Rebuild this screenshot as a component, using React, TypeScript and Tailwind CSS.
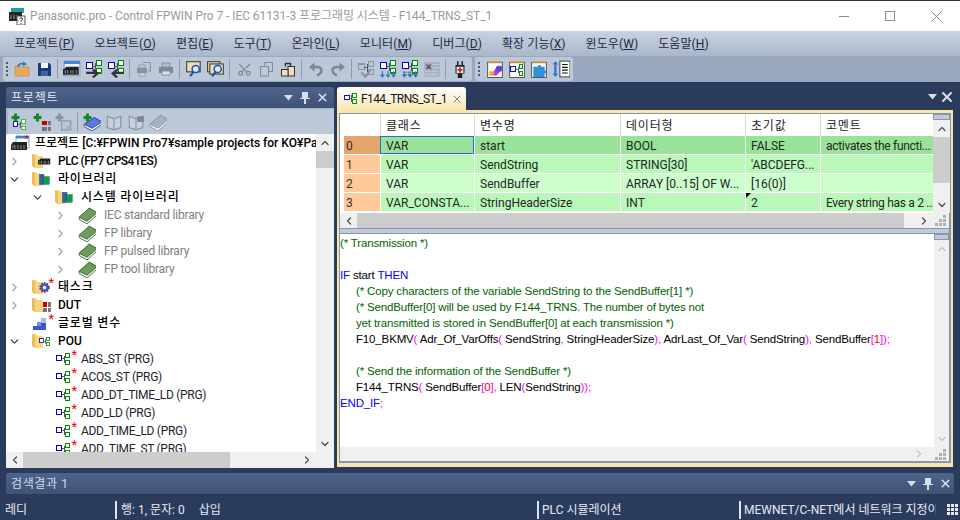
import type { ReactNode } from 'react';
import { ChevronDown, ChevronLeft, ChevronRight, ChevronUp, Scissors, X } from 'lucide-react';

const FONT = 'font-["Roboto","Noto_Sans_CJK_KR",sans-serif]';

function Ico({ children, size = 16 }: { children: ReactNode; size?: number }) {
    return (
        <svg width={size} height={size} viewBox="0 0 16 16" className="shrink-0">
            {children}
        </svg>
    );
}

function PouShape({ a = '#0000c8', b = '#008c00', fill = 'white' }: { a?: string; b?: string; fill?: string }) {
    return (
        <g fill={fill} strokeWidth="1" shapeRendering="crispEdges">
            <rect x="1.5" y="4.5" width="5" height="5" stroke={a} />
            <path d="M6.5 7.5H9.5M9.5 4.5V11.5" stroke="#555" fill="none" />
            <rect x="10.5" y="2.5" width="4" height="4" stroke={b} />
            <rect x="10.5" y="9.5" width="4" height="4" stroke={b} />
        </g>
    );
}

const Pou = () => <Ico><PouShape /></Ico>;

function Rack({ x = 1, y = 6 }: { x?: number; y?: number }) {
    return (
        <g transform={`translate(${x} ${y})`}>
            <path d="M1 2L3 0H14V7H0V2Z" fill="#222" />
            <path d="M2 3V6M4 3V6M7 3V6M9 3V6M12 3V6" stroke="#888" strokeWidth="1" />
        </g>
    );
}

const OpenIcon = () => (
    <Ico>
        <path d="M1 5H6L7 6H15V15H1Z" fill="#e9a95c" stroke="#b98543" strokeWidth="0.6" />
        <path d="M4 6C4 3 7 2 10 3" fill="none" stroke="#2478c8" strokeWidth="1.6" />
        <path d="M9 0.5L13 3L9 5.5Z" fill="#2478c8" />
    </Ico>
);

const SaveIcon = () => (
    <Ico>
        <path d="M2 2H13L15 4V15H2Z" fill="#1b3b78" />
        <rect x="5" y="2" width="7" height="5" fill="#f2f5fa" />
        <rect x="5" y="10" width="7" height="5" fill="#3e63a8" />
    </Ico>
);

const PlcIcon = () => (
    <Ico size={18}>
        <rect x="1" y="1" width="14" height="13" fill="#f2f6fc" stroke="#6d93cf" strokeWidth="0.8" />
        <rect x="1" y="1" width="14" height="2.5" fill="#3f7fd8" />
        <Rack x={0} y={6} />
    </Ico>
);

function TransferIcon({ left }: { left?: boolean }) {
    return (
        <Ico size={18}>
            <g transform="translate(0 -2)"><PouShape /></g>
            <path d={left ? 'M15 12H6M9 9L5 12.5L9 16' : 'M1 12H10M7 9L11 12.5L7 16'} transform="translate(0 -0.5)" fill="none" stroke="#333" strokeWidth="2" />
        </Ico>
    );
}

const PrintDocIcon = () => (
    <Ico>
        <path d="M7 1.5H14.5V10H12" fill="none" stroke="#8a93a3" strokeWidth="1" />
        <rect x="1" y="7" width="10" height="5" fill="#8a93a3" />
        <rect x="3" y="4" width="6" height="3" fill="#c5ccd8" stroke="#8a93a3" strokeWidth="0.8" />
        <rect x="3" y="12" width="6" height="3" fill="#d3d9e3" stroke="#8a93a3" strokeWidth="0.8" />
    </Ico>
);

const PrintIcon = () => (
    <Ico>
        <rect x="1" y="6" width="14" height="6" fill="#7f8898" />
        <rect x="4" y="2" width="8" height="4" fill="#b5bdca" stroke="#7f8898" strokeWidth="0.8" />
        <rect x="4" y="10" width="8" height="4" fill="#d8dde6" stroke="#7f8898" strokeWidth="0.8" />
    </Ico>
);

function SearchIcon({ many }: { many?: boolean }) {
    return (
        <Ico size={18}>
            {many && <rect x="0.5" y="1.5" width="11" height="9" fill="#ead9c0" stroke="#3c4a2a" />}
            <rect x={many ? 2.5 : 1.5} y={many ? 3.5 : 1.5} width="12" height="9" fill="#f2dcc0" stroke="#3c4a2a" />
            <circle cx="9.5" cy="8" r="3.2" fill="#dfe9f8" stroke="#1e50b4" strokeWidth="1.3" />
            <path d="M7.5 10.5L4.5 14.5" stroke="#1e50b4" strokeWidth="1.8" />
        </Ico>
    );
}

const CopyIcon = () => (
    <Ico>
        <path d="M6.5 4.5V1.5H14.5V10.5H11" fill="none" stroke="#808998" />
        <rect x="2.5" y="5.5" width="8" height="9.5" fill="none" stroke="#808998" />
    </Ico>
);

const PasteIcon = () => (
    <Ico>
        <rect x="8" y="5.5" width="6.5" height="9.5" fill="#f2dcc0" stroke="#333" />
        <rect x="1.5" y="8.5" width="6.5" height="6.5" fill="#f2dcc0" stroke="#333" />
        <path d="M5.5 5.5V2.5H10.5V5.5" fill="none" stroke="#333" strokeWidth="1.4" />
    </Ico>
);

const UndoIcon = ({ flip }: { flip?: boolean }) => (
    <Ico>
        <g transform={flip ? 'translate(16 0) scale(-1 1)' : undefined}>
            <path d="M4 6H9.5C12 6 13.5 7.5 13.5 9.5C13.5 11.5 12 13 9 14.5" fill="none" stroke="#7b8494" strokeWidth="2.4" />
            <path d="M1 6L6.5 1.5V10.5Z" fill="#7b8494" />
        </g>
    </Ico>
);

const CheckPouIcon = () => (
    <Ico size={18}>
        <g transform="translate(0 -1)"><PouShape a="#8a93a3" b="#8a93a3" fill="none" /></g>
        <path d="M4 11L7.5 15L12 9" fill="none" stroke="#8a93a3" strokeWidth="2" />
    </Ico>
);

function ArrowsPouIcon({ dotted }: { dotted?: boolean }) {
    return (
        <Ico size={18}>
            <g transform="translate(0 -2)"><PouShape /></g>
            {dotted && <path d="M2 11H14M2 13H14" stroke="#666" strokeWidth="1" strokeDasharray="1 1" />}
            <path d="M3 10V14M1.5 13L3 15L4.5 13M8 10V14M6.5 13L8 15L9.5 13M13 10V14M11.5 13L13 15L14.5 13" fill="none" stroke="#2a6fd8" strokeWidth="1" />
        </Ico>
    );
}

const DotsIcon = () => (
    <Ico size={18}>
        <rect x="1" y="2" width="14" height="13" fill="#a8b1c0" />
        <path d="M3 4L7 8M7 4L3 8" stroke="#555" strokeWidth="1.4" />
        <path d="M9 4H14M9 7H14M2 10H14M2 12.5H14" stroke="#d8dde6" strokeWidth="1" strokeDasharray="1 1" />
    </Ico>
);

const PlugIcon = () => (
    <Ico size={18}>
        <path d="M6 1V5M10 1V5" stroke="#222" strokeWidth="1.4" />
        <path d="M4 4.5H12V12H10V16H6V12H4Z" fill="#222" />
        <rect x="5" y="6" width="6" height="5.5" fill="#f1f1f1" />
        <path d="M8 6.5V11M5.8 8.7H10.2" stroke="#d81e2c" strokeWidth="1.5" />
    </Ico>
);

function Note({ children }: { children?: ReactNode }) {
    return (
        <Ico size={18}>
            <rect x="1.5" y="2" width="13" height="13.5" fill="white" stroke="#444" strokeWidth="0.8" />
            <path d="M2 2H14" stroke="#e3a02a" strokeWidth="2" strokeDasharray="1.5 1" />
            {children}
        </Ico>
    );
}

const Grip = () => (
    <div className="flex h-[20px] w-[8px] shrink-0 flex-col items-center justify-center gap-[2px]">
        <span className="h-[2px] w-[2px] bg-[#4b5a72]" />
        <span className="h-[2px] w-[2px] bg-[#4b5a72]" />
        <span className="h-[2px] w-[2px] bg-[#4b5a72]" />
        <span className="h-[2px] w-[2px] bg-[#4b5a72]" />
    </div>
);

const Sep = () => <span className="ml-[2px] mr-[3px] h-[20px] w-px shrink-0 bg-[#8d9ab0]" />;

const Tb = ({ children }: { children: ReactNode }) => (
    <div className="flex h-[22px] w-[22px] shrink-0 items-center justify-center">{children}</div>
);

const Plus = () => <path d="M4 0.5V7.5M0.5 4H7.5" stroke="#0f8a1e" strokeWidth="2.6" />;

const GridIcon = () => (
    <g shapeRendering="crispEdges">
        <rect x="8" y="7" width="4" height="4" fill="#c80000" />
        <rect x="13" y="7" width="3" height="4" fill="#777" />
        <rect x="8" y="12" width="4" height="4" fill="#777" />
        <rect x="13" y="12" width="3" height="4" fill="#777" />
    </g>
);

const GrayBook = ({ lock }: { lock?: boolean }) => (
    <Ico size={18}>
        <path d="M2 3L8 5V15L2 13ZM14 3L8 5V15L14 13Z" fill="#c9d0db" stroke="#8a93a3" strokeWidth="1" />
        {lock && <rect x="9" y="3" width="6" height="5" fill="#7f8898" />}
    </Ico>
);

const ClosedBook = ({ color = '#6f9c5a', edge = '#3c6a36' }: { color?: string; edge?: string }) => (
    <Ico size={18}>
        <path d="M1 10L10 2L17 6V8L8 16L1 12Z" fill="#f4f4f4" stroke={edge} strokeWidth="0.8" />
        <path d="M1 10L10 2L17 6L8 13.5Z" fill={color} stroke={edge} strokeWidth="0.8" />
    </Ico>
);

const Star = () => <span className="absolute -top-[2px] right-[4px] text-[13px] leading-[13px] text-[#f00000]">*</span>;

const Folder = () => (
    <svg width="12" height="16" viewBox="0 0 12 16" className="absolute left-0 top-[1px]">
        <path d="M0 1H4L6 3H11V15H3L0 13Z" fill="#f6d57f" />
        <path d="M0 1V13L3 15V3Z" fill="#e8bf60" />
    </svg>
);

const LibIcon = () => (
    <Ico size={12}>
        <rect x="2" y="2" width="6" height="13" fill="#2b5fb0" stroke="#1c3c70" strokeWidth="0.6" />
        <rect x="7" y="5" width="8" height="10" fill="#0e9c48" stroke="#0d5f30" strokeWidth="0.6" />
    </Ico>
);

const GearIcon = () => (
    <Ico size={13}>
        <circle cx="8" cy="8" r="5.2" fill="#5a60b8" stroke="#3a3f8f" strokeWidth="2.6" strokeDasharray="2 1.3" />
        <circle cx="8" cy="8" r="2" fill="white" />
    </Ico>
);

const VarIcon = () => (
    <Ico>
        <path d="M1 15V11H5V7H9V3H14V15Z" fill="#3c52d8" />
        <path d="M9 3H14V8H9Z" fill="#a8b8f0" />
        <path d="M5 7H9V11H5Z" fill="#7c8ee8" />
    </Ico>
);

const ROOT_ICON = (
    <svg width="20" height="17" viewBox="0 0 20 17" className="shrink-0">
        <rect x="6" y="1" width="13" height="12" fill="white" stroke="#5f8ed0" strokeWidth="0.8" />
        <rect x="6" y="1" width="13" height="2.5" fill="#3f7fd8" />
        <path d="M1 10L3 7H17V15H1Z" fill="#222" />
        <path d="M3 10V14M5 10V14M8 10V14M11 10V14M14 10V14" stroke="#888" />
        <text x="15" y="8" fontSize="10" fill="#e00000" fontFamily="Liberation Sans">*</text>
    </svg>
);

type Row = { depth: 0 | 1 | 2; chevron?: 'r' | 'd'; folder?: boolean; icon?: ReactNode; star?: boolean; label: string; tone?: 'strong' | 'latin' | 'tight' | 'muted' | 'plain' };

const TREE: Row[] = [
    { depth: 0, chevron: 'r', folder: true, icon: <Ico size={14}><Rack x={0} y={5} /></Ico>, label: 'PLC (FP7 CPS41ES)', tone: 'tight' },
    { depth: 0, chevron: 'd', folder: true, icon: <LibIcon />, label: '라이브러리', tone: 'strong' },
    { depth: 1, chevron: 'd', folder: true, icon: <LibIcon />, label: '시스템 라이브러리', tone: 'strong' },
    { depth: 2, chevron: 'r', icon: <ClosedBook />, label: 'IEC standard library', tone: 'muted' },
    { depth: 2, chevron: 'r', icon: <ClosedBook />, label: 'FP library', tone: 'muted' },
    { depth: 2, chevron: 'r', icon: <ClosedBook />, label: 'FP pulsed library', tone: 'muted' },
    { depth: 2, chevron: 'r', icon: <ClosedBook />, label: 'FP tool library', tone: 'muted' },
    { depth: 0, chevron: 'r', folder: true, icon: <GearIcon />, star: true, label: '태스크', tone: 'strong' },
    { depth: 0, chevron: 'r', folder: true, icon: <svg width="14" height="14" viewBox="4 3 12 13"><GridIcon /></svg>, label: 'DUT', tone: 'latin' },
    { depth: 0, icon: <VarIcon />, star: true, label: '글로벌 변수', tone: 'strong' },
    { depth: 0, chevron: 'd', folder: true, icon: <svg width="13" height="13" viewBox="0 0 16 16"><PouShape /></svg>, label: 'POU', tone: 'latin' },
    { depth: 1, icon: <Pou />, star: true, label: 'ABS_ST (PRG)' },
    { depth: 1, icon: <Pou />, star: true, label: 'ACOS_ST (PRG)' },
    { depth: 1, icon: <Pou />, star: true, label: 'ADD_DT_TIME_LD (PRG)' },
    { depth: 1, icon: <Pou />, star: true, label: 'ADD_LD (PRG)' },
    { depth: 1, icon: <Pou />, star: true, label: 'ADD_TIME_LD (PRG)' },
    { depth: 1, icon: <Pou />, star: true, label: 'ADD_TIME_ST (PRG)' },
];

const INDENT = { 0: 'pl-0', 1: 'pl-[23px]', 2: 'pl-[46px]' };
const TONE = {
    strong: 'text-black font-medium tracking-[0.8px]',
    latin: 'text-black font-medium',
    tight: 'text-black font-medium tracking-[-0.5px]',
    muted: 'text-[#808080] tracking-[-0.2px]',
    plain: 'text-[#1c2430] tracking-[-0.3px]',
};

function TreeRow({ row }: { row: Row }) {
    return (
        <div className={`flex h-[18px] shrink-0 items-center whitespace-nowrap ${INDENT[row.depth]}`}>
            <div className="flex w-[16px] shrink-0 justify-center">
                {row.chevron === 'r' && <ChevronRight size={13} strokeWidth={2.4} className="text-[#a6a6a6]" />}
                {row.chevron === 'd' && <ChevronDown size={13} strokeWidth={2.4} className="text-[#404040]" />}
            </div>
            <div className={`relative ml-[10px] flex h-[18px] w-[26px] shrink-0 items-center ${row.folder ? 'pl-[6px]' : ''}`}>
                {row.folder && <Folder />}
                <span className="relative flex items-center">{row.icon}</span>
                {row.star && <Star />}
            </div>
            <span className={`text-[12px] ${TONE[row.tone ?? 'plain']}`}>{row.label}</span>
        </div>
    );
}

function PanelControls({ pin = true }: { pin?: boolean }) {
    return (
        <div className={`flex items-center text-[#d8dfea] ${pin ? 'gap-[5px]' : 'gap-[1px]'}`}>
            <svg width="11" height="6" viewBox="0 0 11 6"><path d="M1 0H10L5.5 5.5Z" fill="currentColor" /></svg>
            {pin && (
                <svg width="12" height="13" viewBox="0 0 12 13">
                    <path d="M3 1H9V7H11V8H7V13H5V8H1V7H3Z" fill="currentColor" />
                </svg>
            )}
            <X size={pin ? 13 : 16} strokeWidth={3} />
        </div>
    );
}

const Resize = () => (
    <div className="grid h-[11px] w-[11px] grid-cols-3 gap-px">
        <span /><span /><span className="bg-[#b0b0b0]" />
        <span /><span className="bg-[#b0b0b0]" /><span className="bg-[#b0b0b0]" />
        <span className="bg-[#b0b0b0]" /><span className="bg-[#b0b0b0]" /><span className="bg-[#b0b0b0]" />
    </div>
);

const COLS = ['w-[94px]', 'w-[146px]', 'w-[125px]', 'w-[75px]', 'w-[113px]'];

const HEAD = ['클래스', '변수명', '데이터형', '초기값', '코멘트'];

const VARS = [
    { n: '0', num: 'bg-[#e4a46c]', bg: 'bg-[#99e299]', cells: ['VAR', 'start', 'BOOL', 'FALSE', 'activates the functi...'] },
    { n: '1', num: 'bg-[#ffc999]', bg: 'bg-[#b9f8b9]', cells: ['VAR', 'SendString', 'STRING[30]', "'ABCDEFG...", ''] },
    { n: '2', num: 'bg-[#ffc999]', bg: 'bg-[#ccffcc]', cells: ['VAR', 'SendBuffer', 'ARRAY [0..15] OF W...', '[16(0)]', ''] },
    { n: '3', num: 'bg-[#ffc999]', bg: 'bg-[#b9f8b9]', cells: ['VAR_CONSTA...', 'StringHeaderSize', 'INT', '2', 'Every string has a 2 ...'] },
];

const C = ({ children }: { children: ReactNode }) => <span className="text-[#006400]">{children}</span>;
const K = ({ children }: { children: ReactNode }) => <span className="text-[#0000ff]">{children}</span>;
const P = ({ children }: { children: ReactNode }) => <span className="text-[#ff00ff]">{children}</span>;
const R = ({ children }: { children: ReactNode }) => <span className="text-[#ff0000]">{children}</span>;

function Line({ indent, children }: { indent?: boolean; children?: ReactNode }) {
    return <div className={`h-[16px] whitespace-pre leading-[16px] ${indent ? 'pl-[16px]' : ''}`}>{children}</div>;
}

const MENU: [string, string][] = [
    ['프로젝트', 'P'], ['오브젝트', 'O'], ['편집', 'E'], ['도구', 'T'], ['온라인', 'L'],
    ['모니터', 'M'], ['디버그', 'D'], ['확장 기능', 'X'], ['윈도우', 'W'], ['도움말', 'H'],
];

export default function App() {
    return (
        <div className={`flex h-[520px] w-[960px] flex-col overflow-hidden bg-[#2b3b5c] text-[12px] ${FONT}`}>
            {/* title bar */}
            <div className="flex h-[31px] shrink-0 items-center border-t border-[#333] bg-white pl-[9px]">
                <svg width="17" height="17" viewBox="0 0 17 17" className="shrink-0">
                    <rect x="2" y="0" width="13" height="5" fill="#1ba0a8" />
                    <rect x="0" y="4" width="13" height="9" fill="#222" />
                    <path d="M2 7V11M5 7V11M8 7V11" stroke="#999" />
                    <rect x="8" y="8" width="8" height="9" fill="#f4f4f4" stroke="#333" strokeWidth="0.8" />
                    <path d="M10.5 10.5C11 9.5 13.5 9.5 13.5 11C13.5 12.5 12 12 12 13.5M12 15V15.8" fill="none" stroke="#222" strokeWidth="1" />
                </svg>
                <span className="ml-[4px] text-[12px] tracking-[-0.07px] text-[#9b9b9b]">Panasonic.pro - Control FPWIN Pro 7 - IEC 61131-3 프로그래밍 시스템 - F144_TRNS_ST_1</span>
                <div className="ml-auto flex h-full items-center pr-[1px] text-[#8a8a8a]">
                    <div className="flex w-[46px] justify-center"><span className="h-px w-[10px] bg-[#8a8a8a]" /></div>
                    <div className="flex w-[46px] justify-center"><span className="h-[10px] w-[10px] border border-[#8a8a8a]" /></div>
                    <div className="flex w-[46px] justify-center">
                        <svg width="11" height="11" viewBox="0 0 11 11"><path d="M0.5 0.5L10.5 10.5M10.5 0.5L0.5 10.5" stroke="#8a8a8a" /></svg>
                    </div>
                </div>
            </div>

            {/* menu */}
            <div className="flex h-[25px] shrink-0 items-center bg-gradient-to-b from-[#c9d2e2] to-[#aab6ca] pl-[4px] tracking-[0.08px] text-[#1c2a44]">
                {MENU.map(([name, key]) => (
                    <span key={key} className="whitespace-nowrap px-[10px]">
                        {name}(<u>{key}</u>)
                    </span>
                ))}
            </div>

            {/* toolbars */}
            <div className="flex h-[26px] shrink-0 items-center gap-[3px] bg-[#9aa9bf] pl-[3px]">
                <div className="flex h-[24px] w-[469px] items-center rounded-[3px] bg-[#bcc7d8]">
                    <Grip />
                    <Tb><OpenIcon /></Tb>
                    <Tb><SaveIcon /></Tb>
                    <Sep />
                    <Tb><PlcIcon /></Tb>
                    <Tb><TransferIcon /></Tb>
                    <Tb><TransferIcon left /></Tb>
                    <Sep />
                    <Tb><PrintDocIcon /></Tb>
                    <Tb><PrintIcon /></Tb>
                    <Sep />
                    <Tb><SearchIcon /></Tb>
                    <Tb><SearchIcon many /></Tb>
                    <Sep />
                    <Tb><Scissors size={15} className="-rotate-90 text-[#808998]" /></Tb>
                    <Tb><CopyIcon /></Tb>
                    <Tb><PasteIcon /></Tb>
                    <Sep />
                    <Tb><UndoIcon /></Tb>
                    <Tb><UndoIcon flip /></Tb>
                    <Sep />
                    <Tb><CheckPouIcon /></Tb>
                    <Tb><ArrowsPouIcon /></Tb>
                    <Tb><ArrowsPouIcon dotted /></Tb>
                    <Tb><DotsIcon /></Tb>
                    <Sep />
                    <Tb><PlugIcon /></Tb>
                </div>
                <div className="flex h-[24px] w-[98px] items-center rounded-[3px] bg-[#bcc7d8]">
                    <Grip />
                    <div className="w-[1px]" />
                    <Tb>
                        <Note>
                            <path d="M5 13L10 5H14V9L9 14Z" fill="#c832d8" />
                            <path d="M9 6H14V10H9Z" fill="#3c50e0" />
                            <path d="M3 14V10H7V14Z" fill="#f0a830" />
                        </Note>
                    </Tb>
                    <Tb>
                        <Note><g transform="translate(1 2) scale(0.85)"><PouShape /></g></Note>
                    </Tb>
                    <Tb>
                        <Note>
                            <path d="M3 6H7C7 4 10 4 10 6H13V9C15 9 15 12 13 12V15H3Z" fill="#2f8fd8" />
                        </Note>
                    </Tb>
                    <Tb>
                        <Ico size={18}>
                            <path d="M3 1L0.5 4H5.5ZM3 15L0.5 12H5.5Z" fill="#2a6fd8" />
                            <path d="M3 4V12" stroke="#2a6fd8" strokeWidth="2" />
                            <rect x="7" y="1" width="9" height="14" fill="white" stroke="#333" strokeWidth="0.8" />
                            <path d="M9 4H14M9 6.5H14M9 9H14M9 11.5H14" stroke="#111" />
                        </Ico>
                    </Tb>
                </div>
            </div>

            {/* workspace */}
            <div className="flex h-[391px] shrink-0 gap-[3px] pl-[6px] pt-[5px]">
                {/* project panel */}
                <div className="flex h-[381px] w-[328px] shrink-0 flex-col">
                    <div className="flex h-[21px] shrink-0 items-center justify-between rounded-t-[3px] bg-gradient-to-b from-[#50638a] to-[#3f5379] pl-[5px] pr-[5px] text-[#e6ebf3]">
                        <span className="tracking-[0.8px]">프로젝트</span>
                        <PanelControls />
                    </div>
                    <div className="flex h-[26px] shrink-0 items-end bg-[#a9b5c9] pl-[2px]">
                        <div className="flex h-[25px] w-full items-center rounded-tl-[3px] bg-[#bcc7d8] pl-[1px]">
                            <Tb><Ico size={18}><g transform="translate(1 4) scale(0.8)"><PouShape a="#0000c8" b="#22bb22" /></g><Plus /></Ico></Tb>
                            <Tb><Ico size={18}><GridIcon /><Plus /></Ico></Tb>
                            <Tb>
                                <Ico size={18}>
                                    <path d="M4 0.5V7.5M0.5 4H7.5" stroke="#8a93a3" strokeWidth="2.6" />
                                    <rect x="6" y="7" width="8" height="8" fill="none" stroke="#8a93a3" />
                                    <path d="M9 14L13 10L16 14Z" fill="#a8b1c0" />
                                </Ico>
                            </Tb>
                            <Sep />
                            <Tb>
                                <Ico size={18}>
                                    <path d="M1 10L10 4L17 8V10L8 16L1 12Z" fill="#f4f4f4" stroke="#2a4fb0" strokeWidth="0.8" />
                                    <path d="M1 10L10 4L17 8L8 13.5Z" fill="#5a78e0" stroke="#2a4fb0" strokeWidth="0.8" />
                                    <Plus />
                                </Ico>
                            </Tb>
                            <Tb><GrayBook /></Tb>
                            <Tb><GrayBook lock /></Tb>
                            <Tb><ClosedBook color="#a9b1be" edge="#8a93a3" /></Tb>
                        </div>
                    </div>

                    <div className="flex min-h-0 flex-1 bg-[#f0f0f0]">
                        <div className="flex w-[310px] shrink-0 flex-col overflow-hidden bg-white">
                            <div className="flex h-[18px] shrink-0 items-center gap-[5px] whitespace-nowrap pl-[4px] font-medium text-black">
                                {ROOT_ICON}
                                <span>프로젝트 [C:¥FPWIN Pro7¥sample projects for KO¥Panasonic.pro]</span>
                            </div>
                            {TREE.map((row, i) => <TreeRow key={i} row={row} />)}
                        </div>
                        <div className="flex w-[18px] shrink-0 flex-col items-center">
                            <div className="flex h-[17px] items-center"><ChevronUp size={12} strokeWidth={2.6} className="text-[#505050]" /></div>
                            <div className="h-[17px] w-full bg-[#cdcdcd]" />
                            <div className="flex-1" />
                            <div className="flex h-[17px] items-center"><ChevronDown size={12} strokeWidth={2.6} className="text-[#505050]" /></div>
                        </div>
                    </div>
                    <div className="flex h-[16px] shrink-0 items-center bg-[#f0f0f0]">
                        <div className="flex w-[17px] justify-center"><ChevronLeft size={12} strokeWidth={2.6} className="text-[#505050]" /></div>
                        <div className="h-full w-[207px] bg-[#cdcdcd]" />
                        <div className="flex-1" />
                        <div className="mr-[19px] flex w-[17px] justify-center"><ChevronRight size={12} strokeWidth={2.6} className="text-[#505050]" /></div>
                    </div>
                </div>

                {/* document area */}
                <div className="flex h-[381px] w-[616px] shrink-0 flex-col">
                    <div className="flex h-[23px] shrink-0 items-start justify-between">
                        <div className="flex h-[23px] w-[129px] items-center rounded-t-[3px] bg-gradient-to-b from-white to-[#f8e7ae] pl-[6px] text-[#141414]">
                            <svg width="15" height="15" viewBox="0 0 16 16" className="shrink-0"><PouShape /></svg>
                            <span className="ml-[3px] whitespace-nowrap tracking-[-0.6px]">F144_TRNS_ST_1</span>
                            <X size={12} strokeWidth={1.8} className="ml-auto mr-[3px] text-[#707070]" />
                        </div>
                        <div className="-mr-[2px] mt-[2px]"><PanelControls pin={false} /></div>
                    </div>
                    <div className="flex h-[357px] shrink-0 flex-col border-x-[2px] border-y-[3px] border-b-[4px] border-[#f6e6aa]">
                        <div className="flex min-h-0 flex-1 flex-col border border-b-[2px] border-r-[2px] border-[#8795ad]">
                            {/* declaration table */}
                            <div className="flex h-[99px] shrink-0">
                                <div className="relative w-[593px] shrink-0 bg-white">
                                    <div className="flex h-[22px] pl-[40px]">
                                        {HEAD.map((h, i) => (
                                            <div key={h} className={`${COLS[i]} flex items-center border-l border-[#d9d9d9] pl-[5px] pt-[2px] tracking-[0.8px] text-[#222]`}>{h}</div>
                                        ))}
                                    </div>
                                    {VARS.map(row => (
                                        <div key={row.n} className="mb-px flex h-[18px]">
                                            <div className={`ml-[4px] flex w-[36px] items-center pl-[2px] pt-[1px] text-[#333] ${row.num}`}>{row.n}</div>
                                            {row.cells.map((c, i) => (
                                                <div key={i} className={`${COLS[i]} flex items-center overflow-hidden whitespace-nowrap pl-[5px] pt-[1px] text-[#252525] ${row.bg} ${i === 4 ? 'tracking-[-0.3px]' : ''} ${row.n === '0' && i === 0 ? 'border border-[#1f72c8]' : 'border-l border-white'}`}>{c}</div>
                                            ))}
                                        </div>
                                    ))}
                                    <span className="absolute left-[406px] top-[79px] h-0 w-0 border-r-[5px] border-t-[5px] border-r-transparent border-t-black" />
                                </div>
                                <div className="flex w-[17px] shrink-0 flex-col items-center bg-[#f0f0f0]">
                                    <div className="h-[6px] w-full border border-[#8795ad] bg-[#c0cadb]" />
                                    <div className="flex h-[17px] items-center"><ChevronUp size={12} strokeWidth={2.6} className="text-[#505050]" /></div>
                                    <div className="h-[46px] w-full bg-[#cdcdcd]" />
                                    <div className="flex-1" />
                                    <div className="flex h-[17px] items-center"><ChevronDown size={12} strokeWidth={2.6} className="text-[#505050]" /></div>
                                </div>
                            </div>
                            <div className="flex h-[15px] shrink-0 items-center bg-[#f0f0f0]">
                                <div className="flex w-[17px] justify-center"><ChevronLeft size={12} strokeWidth={2.6} className="text-[#505050]" /></div>
                                <div className="h-full w-[547px] bg-[#cdcdcd]" />
                                <div className="flex flex-1 justify-center pl-[12px]"><ChevronRight size={12} strokeWidth={2.6} className="text-[#505050]" /></div>
                                <div className="flex w-[17px] justify-center"><Resize /></div>
                            </div>
                            <div className="h-[6px] shrink-0 border-y border-[#8795ad] bg-[#c0cadb]" />

                            {/* code editor */}
                            <div className="flex min-h-0 flex-1">
                                <div className="w-[594px] shrink-0 bg-white pt-[1px] font-['Liberation_Sans',sans-serif] text-[11.5px] tracking-[-0.15px] text-black">
                                    <Line><C>(* Transmission *)</C></Line>
                                    <Line />
                                    <Line><K>IF</K> start <K>THEN</K></Line>
                                    <Line indent><C>(* Copy characters of the variable SendString to the SendBuffer[1] *)</C></Line>
                                    <Line indent><C>(* SendBuffer[0] will be used by F144_TRNS. The number of bytes not</C></Line>
                                    <Line indent><C>yet transmitted is stored in SendBuffer[0] at each transmission *)</C></Line>
                                    <Line indent>F10_BKMV<P>(</P> Adr_Of_VarOffs<P>(</P> SendString<P>,</P> StringHeaderSize<P>),</P> AdrLast_Of_Var<P>(</P> SendString<P>),</P> SendBuffer<P>[</P><R>1</R><P>]);</P></Line>
                                    <Line />
                                    <Line indent><C>(* Send the information of the SendBuffer *)</C></Line>
                                    <Line indent>F144_TRNS<P>(</P> SendBuffer<P>[</P><R>0</R><P>],</P> LEN<P>(</P>SendString<P>));</P></Line>
                                    <Line><K>END_IF</K><P>;</P></Line>
                                </div>
                                <div className="flex flex-1 flex-col items-center bg-[#f0f0f0]">
                                    <div className="h-[6px] w-full border border-[#8795ad] bg-[#c0cadb]" />
                                    <div className="flex h-[17px] items-center"><ChevronUp size={12} strokeWidth={2.6} className="text-[#c4c4c4]" /></div>
                                    <div className="flex-1" />
                                    <div className="flex h-[17px] items-center"><ChevronDown size={12} strokeWidth={2.6} className="text-[#c4c4c4]" /></div>
                                </div>
                            </div>
                            <div className="flex h-[14px] shrink-0 items-center justify-end bg-[#f0f0f0]">
                                <ChevronRight size={12} strokeWidth={2.6} className="mr-[7px] text-[#c4c4c4]" />
                                <div className="flex w-[17px] justify-center"><Resize /></div>
                            </div>
                        </div>
                    </div>
                </div>
            </div>

            {/* result panel */}
            <div className="ml-[6px] flex h-[21px] w-[948px] shrink-0 items-center justify-between rounded-t-[3px] bg-gradient-to-b from-[#50638a] to-[#3f5379] pl-[5px] pr-[2px] text-[#d3dbe8]">
                <span className="tracking-[0.6px]">검색결과 1</span>
                <PanelControls />
            </div>

            {/* status bar */}
            <div className="mt-[5px] flex h-[21px] shrink-0 items-center whitespace-nowrap text-[#e6ebf3]">
                <div className="w-[115px] pl-[5px]">레디</div>
                <div className="flex h-[18px] w-[422px] items-center gap-[14px] border-l-[2px] border-[#dfe4ec] pl-[4px]">
                    <span>행: 1, 문자: 0</span>
                    <span>삽입</span>
                </div>
                <div className="flex h-[18px] w-[202px] items-center border-l-[2px] border-[#dfe4ec] pl-[3px]">PLC 시뮬레이션</div>
                <div className="flex h-[18px] w-[197px] items-center overflow-hidden border-l-[2px] border-[#dfe4ec] pl-[3px]">MEWNET/C-NET에서 네트워크 지정이</div>
                <div className="ml-auto mr-[2px] opacity-90 [&_span]:bg-white"><Resize /></div>
            </div>
        </div>
    );
}
